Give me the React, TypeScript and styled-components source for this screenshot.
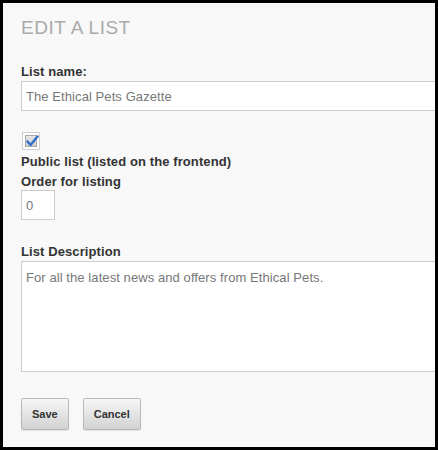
import React from "react";
import styled, { createGlobalStyle } from "styled-components";

const GlobalStyle = createGlobalStyle`
  html, body {
    margin: 0;
    padding: 0;
    background: #000;
  }
  body {
    font-family: "Liberation Sans", Arial, sans-serif;
  }
`;

const Panel = styled.div`
  margin: 3px;
  width: 432px;
  height: 444px;
  box-sizing: border-box;
  padding: 14px 0 0 18px;
  background: #f8f8f8;
  overflow: hidden;
`;

const Title = styled.h1`
  margin: 0;
  font-size: 19px;
  line-height: 22px;
  font-weight: normal;
  color: #aaaaaa;
  letter-spacing: 0.5px;
`;

const Label = styled.label<{ $gap: number }>`
  display: block;
  margin-top: ${(p) => p.$gap}px;
  font-size: 13px;
  line-height: 15px;
  font-weight: bold;
  color: #333;
  letter-spacing: 0.1px;
`;

const fieldBase = `
  display: block;
  box-sizing: border-box;
  border: 1px solid #cccccc;
  background: #fff;
  color: #777;
  font-family: "Liberation Sans", Arial, sans-serif;
  font-size: 13px;
  line-height: 15px;
  letter-spacing: 0.08px;
  outline: none;
  margin: 0;
`;

const TextInput = styled.input<{ $width: number; $gap: number }>`
  ${fieldBase}
  margin-top: ${(p) => p.$gap}px;
  width: ${(p) => p.$width}px;
  height: 30px;
  padding: 0 4px;
`;

const TextArea = styled.textarea`
  ${fieldBase}
  margin-top: 2px;
  width: 430px;
  height: 111px;
  padding: 8px 4px;
  resize: none;
`;

const CheckRow = styled.div`
  margin-top: 21px;
  height: 18px;
  display: flex;
  align-items: center;
`;

const CheckFrame = styled.span`
  position: relative;
  display: inline-block;
  box-sizing: border-box;
  width: 18px;
  height: 18px;
  margin-left: 1px;
  border: 1px solid #d0d0d0;
  background: #fff;
  padding: 2px;
`;

const CheckInner = styled.span`
  display: block;
  box-sizing: border-box;
  width: 12px;
  height: 12px;
  border: 1px solid #a8a8a8;
  background: linear-gradient(#e6e6e6, #cfcfcf);
`;

const CheckMark = styled.svg`
  position: absolute;
  left: 2px;
  top: 1px;
`;

const Actions = styled.div`
  margin-top: 26px;
  display: flex;
  gap: 14px;
`;

const Button = styled.button`
  box-sizing: border-box;
  height: 32px;
  padding: 0 10px;
  border: 1px solid #b8b8b8;
  border-radius: 2px;
  background: linear-gradient(#f6f6f6, #d2d2d2);
  box-shadow: 0 1px 1px rgba(0, 0, 0, 0.08);
  font-family: "Liberation Sans", Arial, sans-serif;
  font-size: 11px;
  font-weight: bold;
  color: #333;
  cursor: pointer;
`;

export default function App() {
  return (
    <>
      <GlobalStyle />
      <Panel>
        <Title>EDIT A LIST</Title>

        <Label $gap={25}>List name:</Label>
        <TextInput $width={430} $gap={2} defaultValue="The Ethical Pets Gazette" />

        <CheckRow>
          <CheckFrame>
            <CheckInner />
            <CheckMark width="14" height="14" viewBox="0 0 14 14">
              <path
                d="M2.5 7.5 L5.5 11 L12.5 2.5"
                fill="none"
                stroke="#2f6fc4"
                strokeWidth="2.4"
                strokeLinecap="round"
                strokeLinejoin="round"
              />
            </CheckMark>
          </CheckFrame>
        </CheckRow>
        <Label $gap={4}>Public list (listed on the frontend)</Label>

        <Label $gap={5}>Order for listing</Label>
        <TextInput $width={34} $gap={1} defaultValue="0" />

        <Label $gap={24}>List Description</Label>
        <TextArea defaultValue="For all the latest news and offers from Ethical Pets." />

        <Actions>
          <Button>Save</Button>
          <Button>Cancel</Button>
        </Actions>
      </Panel>
    </>
  );
}
